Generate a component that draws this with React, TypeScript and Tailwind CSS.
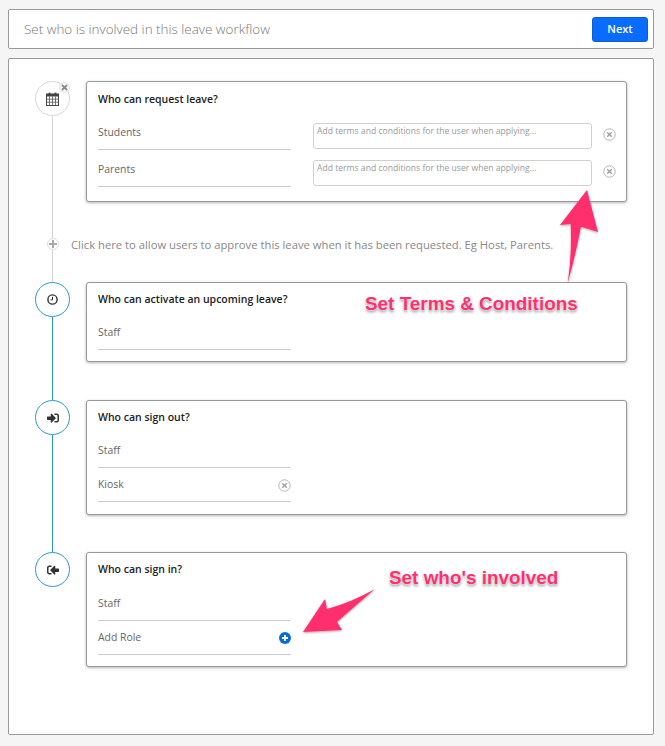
import type { ReactNode } from 'react';
import { FaSignInAlt } from 'react-icons/fa';

const BLUE_LINE = 'bg-[#2a9bc4]';
const GREY_LINE = 'bg-[#d6d6d6]';

/** Small outlined circle with a cross, used to remove a role. */
function RemoveIcon() {
  return (
    <svg width="13" height="13" viewBox="0 0 13 13" fill="none" className="shrink-0">
      <circle cx="6.5" cy="6.5" r="5.7" stroke="#b4b4b4" strokeWidth="1" />
      <path d="M4.2 4.2l4.6 4.6M8.8 4.2l-4.6 4.6" stroke="#a0a0a0" strokeWidth="1.4" />
    </svg>
  );
}

function CalendarIcon() {
  return (
    <svg width="13" height="14" viewBox="0 0 13 14" fill="none">
      <rect x="0.5" y="2" width="12" height="11.5" fill="#fff" stroke="#444" />
      <rect x="0.5" y="2" width="12" height="2.5" fill="#444" />
      <rect x="2.5" y="0.5" width="2" height="3" rx="1" fill="#444" />
      <rect x="8.5" y="0.5" width="2" height="3" rx="1" fill="#444" />
      <path d="M3.5 4.5v9M6.5 4.5v9M9.5 4.5v9M1 7.2h11M1 10.2h11" stroke="#555" strokeWidth="0.8" />
    </svg>
  );
}

function ClockIcon() {
  return (
    <svg width="11" height="11" viewBox="0 0 11 11" fill="none">
      <circle cx="5.5" cy="5.5" r="4.6" stroke="#333" strokeWidth="1.4" />
      <path d="M5.5 2.8V5.9H3.5" stroke="#333" strokeWidth="1" />
    </svg>
  );
}

function Step({ icon, ring, line, children, closable, pb }: { icon: ReactNode; ring: string; line?: string; children: ReactNode; closable?: boolean; pb: string }) {
  return (
    <div className="flex">
      <div className="ml-[26px] flex w-[35px] shrink-0 flex-col items-center">
        <div className={`relative flex h-[35px] w-[35px] shrink-0 items-center justify-center rounded-full border bg-white ${ring}`}>
          {icon}
          {closable && (
            <span className="absolute top-0 -right-[1px] flex h-[11px] w-[11px] items-center justify-center rounded-full border border-[#e2e2e2] bg-[#f8f8f8]">
              <svg width="7" height="7" viewBox="0 0 7 7"><path d="M1 1l5 5M6 1L1 6" stroke="#8a8a8a" strokeWidth="1.8" /></svg>
            </span>
          )}
        </div>
        {line && <div className={`w-px flex-1 ${line}`} />}
      </div>
      <div className={`ml-[16px] w-[541px] ${pb}`}>{children}</div>
    </div>
  );
}

function Card({ title, titleClass, children }: { title: string; titleClass: string; children: ReactNode }) {
  return (
    <div className="rounded-[3px] border border-[#999] bg-white px-[11px] shadow-[0_1px_3px_rgba(0,0,0,0.3)]">
      <div className={`flex items-center text-[10.5px] font-semibold text-[#222] ${titleClass}`}>{title}</div>
      {children}
    </div>
  );
}

/** A role row with the underline; `right` sits at the end of the line. */
function RoleRow({ label, right }: { label: string; right?: ReactNode }) {
  return (
    <div className="flex h-[34px] w-[193px] items-center justify-between border-b border-[#ccc] pt-[1px] text-[10.4px] text-[#666]">
      <span>{label}</span>
      {right}
    </div>
  );
}

function TermsRow({ label }: { label: string }) {
  return (
    <div className="flex h-[37px] items-start">
      <div className="flex h-[37px] w-[193px] shrink-0 items-center border-b border-[#ccc] pt-[4px] text-[10.4px] text-[#666]">{label}</div>
      <textarea
        rows={1}
        placeholder="Add terms and conditions for the user when applying..."
        className="mt-[10px] ml-[22px] h-[26px] w-[279px] shrink-0 resize-none rounded-[3px] border border-[#d0d0d0] bg-white px-[3px] pt-[1px] pb-0 text-[8.6px] leading-[13px] placeholder:text-[#999]"
      />
      <div className="mt-[15px] ml-[11px]"><RemoveIcon /></div>
    </div>
  );
}

export default function App() {
  return (
    <div className="relative h-[746px] w-[665px] overflow-hidden bg-[#f5f5f5] pt-[9px] pl-[8px] font-['Open_Sans',sans-serif]">
      {/* header bar */}
      <div className="flex h-[40px] w-[646px] items-center justify-between rounded-[2px] border border-[#999] bg-white pr-[5px] pl-[15px]">
        <span className="text-[13.45px] font-light text-[#777]">Set who is involved in this leave workflow</span>
        <button className="h-[25px] w-[56px] rounded-[3px] border border-[#0a5fd0] bg-[#0a6cff] text-[11px] font-semibold text-white">Next</button>
      </div>

      {/* workflow panel */}
      <div className="mt-[9px] h-[677px] w-[646px] rounded-[2px] border border-[#999] bg-white pt-[22px]">
        <Step icon={<CalendarIcon />} ring="border-[#d6d6d6]" line={GREY_LINE} closable pb="pb-[36px]">
          <Card title="Who can request leave?" titleClass="h-[31px] pt-[5px]">
            <TermsRow label="Students" />
            <TermsRow label="Parents" />
            <div className="h-[14px]" />
          </Card>
        </Step>

        <div className="flex h-[44px]">
          <div className="ml-[26px] flex w-[35px] shrink-0 flex-col items-center">
            <span className="flex h-[12px] w-[12px] shrink-0 items-center justify-center rounded-full border border-[#dcdcdc] bg-white">
              <svg width="8" height="8" viewBox="0 0 8 8"><path d="M4 0v8M0 4h8" stroke="#aaa" strokeWidth="2" /></svg>
            </span>
            <div className={`w-px flex-1 ${GREY_LINE}`} />
          </div>
          <span className="ml-[1px] h-[14px] text-[11.25px] leading-[14px] whitespace-nowrap text-[#888]">Click here to allow users to approve this leave when it has been requested. Eg Host, Parents.</span>
        </div>

        <Step icon={<ClockIcon />} ring="border-[#2a9bc4]" line={BLUE_LINE} pb="pb-[38px]">
          <Card title="Who can activate an upcoming leave?" titleClass="h-[33px]">
            <RoleRow label="Staff" />
            <div className="h-[11px]" />
          </Card>
        </Step>

        <Step icon={<FaSignInAlt size={12} color="#333" />} ring="border-[#2a9bc4]" line={BLUE_LINE} pb="pb-[37px]">
          <Card title="Who can sign out?" titleClass="h-[33px]">
            <RoleRow label="Staff" />
            <RoleRow label="Kiosk" right={<RemoveIcon />} />
            <div className="h-[12px]" />
          </Card>
        </Step>

        <Step icon={<FaSignInAlt size={12} color="#333" className="-scale-x-100" />} ring="border-[#2a9bc4]" pb="pb-0">
          <Card title="Who can sign in?" titleClass="h-[34px] pb-[1px]">
            <RoleRow label="Staff" />
            <RoleRow
              label="Add Role"
              right={
                <span className="flex h-[12px] w-[12px] items-center justify-center rounded-full bg-[#0a6cd8]">
                  <svg width="8" height="8" viewBox="0 0 8 8"><path d="M4 1v6M1 4h6" stroke="#fff" strokeWidth="1.8" /></svg>
                </span>
              }
            />
            <div className="h-[11px]" />
          </Card>
        </Step>
      </div>

      {/* screenshot annotations drawn on top of the page */}
      <svg width="665" height="746" className="pointer-events-none absolute top-0 left-0">
        <defs>
          <filter id="arrowShadow" x="-20%" y="-20%" width="140%" height="140%">
            <feDropShadow dx="0" dy="1" stdDeviation="1.2" floodColor="#000" floodOpacity="0.35" />
          </filter>
        </defs>
        <path d="M587 190L560 225L570.7 224Q572 255 567.7 283.3Q575 258 581 226.7L598 232Z" fill="#ff2f6d" filter="url(#arrowShadow)" />
        <path d="M303 632L325 599L327 609Q352 602 375 589Q355 606 337 622L342 630Z" fill="#ff2f6d" filter="url(#arrowShadow)" />
      </svg>
      <span className="absolute top-[293px] left-[365px] font-['Liberation_Sans',sans-serif] text-[18.9px] leading-[21px] font-bold whitespace-nowrap text-[#ff2f6d] [text-shadow:0_0_1px_#fff,0_0_2px_#fff,0_2px_3px_rgba(0,0,0,0.45)]">Set Terms &amp; Conditions</span>
      <span className="absolute top-[567px] left-[389px] font-['Liberation_Sans',sans-serif] text-[18.9px] leading-[21px] font-bold whitespace-nowrap text-[#ff2f6d] [text-shadow:0_0_1px_#fff,0_0_2px_#fff,0_2px_3px_rgba(0,0,0,0.45)]">Set who's involved</span>
    </div>
  );
}
